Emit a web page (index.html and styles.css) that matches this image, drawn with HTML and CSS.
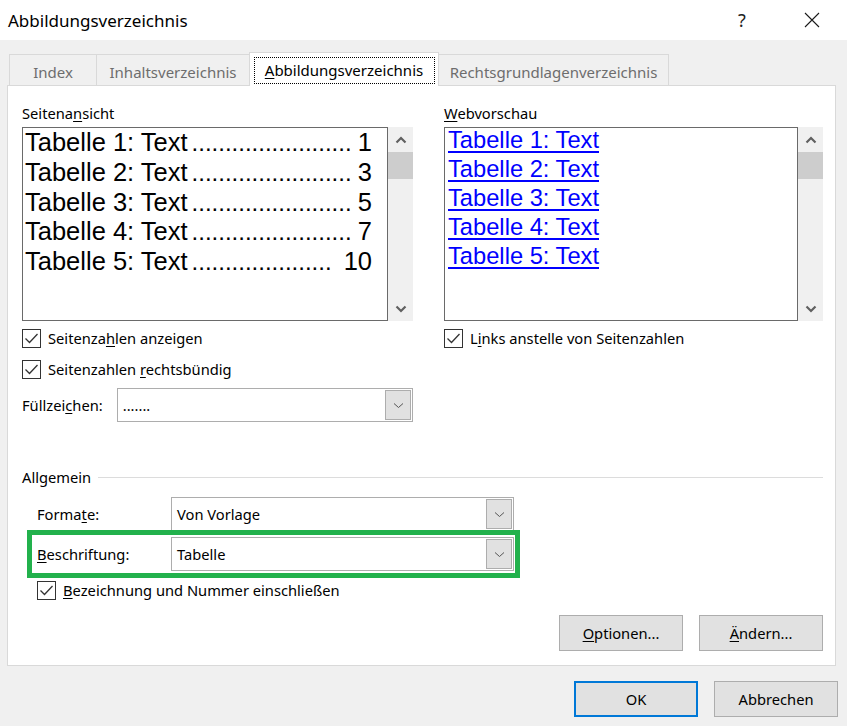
FILE: index.html
```html
<!DOCTYPE html>
<html lang="de">
<head>
<meta charset="utf-8">
<title>Abbildungsverzeichnis</title>
<link rel="stylesheet" href="styles.css">
</head>
<body>
<div class="titlebar">
  <span class="title">Abbildungsverzeichnis</span>
  <span class="help">?</span>
  <span class="close"><svg width="16" height="16" viewBox="0 0 16 16"><path d="M1 1 L15 15 M15 1 L1 15" stroke="#1a1a1a" stroke-width="1.1" fill="none"/></svg></span>
</div>

<div class="tabs">
  <div class="tab tab-index">Index</div>
  <div class="tab tab-inhalt">Inhaltsverzeichnis</div>
  <div class="tab tab-active"><span class="focus"><u>A</u>bbildungsverzeichnis</span></div>
  <div class="tab tab-recht">Rechtsgrundlagenverzeichnis</div>
</div>

<div class="panel">
  <div class="top">
    <div class="col col-left">
      <div class="label">Seitena<u>n</u>sicht</div>
      <div class="preview">
        <div class="listbox list-left">
          <div class="row"><span class="txt">Tabelle 1: Text</span><span class="lead">........................</span><span class="num">1</span></div>
          <div class="row"><span class="txt">Tabelle 2: Text</span><span class="lead">........................</span><span class="num">3</span></div>
          <div class="row"><span class="txt">Tabelle 3: Text</span><span class="lead">........................</span><span class="num">5</span></div>
          <div class="row"><span class="txt">Tabelle 4: Text</span><span class="lead">........................</span><span class="num">7</span></div>
          <div class="row"><span class="txt">Tabelle 5: Text</span><span class="lead">.....................</span><span class="num">10</span></div>
        </div>
        <div class="scrollbar">
          <div class="arrow"><svg width="12" height="8" viewBox="0 0 12 8"><polyline points="1.5,6.5 6,2 10.5,6.5" fill="none" stroke="#606060" stroke-width="2.2"/></svg></div>
          <div class="thumb"></div>
          <div class="track"></div>
          <div class="arrow"><svg width="12" height="8" viewBox="0 0 12 8"><polyline points="1.5,1.5 6,6 10.5,1.5" fill="none" stroke="#606060" stroke-width="2.2"/></svg></div>
        </div>
      </div>
      <div class="check check-1"><span class="box"><svg width="17" height="17" viewBox="0 0 17 17"><polyline points="2.5,8.5 6.5,12.5 14.5,4" fill="none" stroke="#333" stroke-width="1.3"/></svg></span><span>Seitenza<u>h</u>len anzeigen</span></div>
      <div class="check check-2"><span class="box"><svg width="17" height="17" viewBox="0 0 17 17"><polyline points="2.5,8.5 6.5,12.5 14.5,4" fill="none" stroke="#333" stroke-width="1.3"/></svg></span><span>Seitenzahlen <u>r</u>echtsbündig</span></div>
      <div class="field fill">
        <span class="flabel">Füllzei<u>c</u>hen:</span>
        <div class="combo combo-fill"><span class="value">.......</span><span class="dropbtn"><svg width="11" height="7" viewBox="0 0 11 7"><polyline points="1,1.5 5.5,5.5 10,1.5" fill="none" stroke="#555" stroke-width="1"/></svg></span></div>
      </div>
    </div>
    <div class="divider"></div>
    <div class="col col-right">
      <div class="label"><u>W</u>ebvorschau</div>
      <div class="preview">
        <div class="listbox list-right">
          <div class="link">Tabelle 1: Text</div>
          <div class="link">Tabelle 2: Text</div>
          <div class="link">Tabelle 3: Text</div>
          <div class="link">Tabelle 4: Text</div>
          <div class="link">Tabelle 5: Text</div>
        </div>
        <div class="scrollbar">
          <div class="arrow"><svg width="12" height="8" viewBox="0 0 12 8"><polyline points="1.5,6.5 6,2 10.5,6.5" fill="none" stroke="#606060" stroke-width="2.2"/></svg></div>
          <div class="thumb"></div>
          <div class="track"></div>
          <div class="arrow"><svg width="12" height="8" viewBox="0 0 12 8"><polyline points="1.5,1.5 6,6 10.5,1.5" fill="none" stroke="#606060" stroke-width="2.2"/></svg></div>
        </div>
      </div>
      <div class="check check-1"><span class="box"><svg width="17" height="17" viewBox="0 0 17 17"><polyline points="2.5,8.5 6.5,12.5 14.5,4" fill="none" stroke="#333" stroke-width="1.3"/></svg></span><span>L<u>i</u>nks anstelle von Seitenzahlen</span></div>
    </div>
  </div>

  <div class="group">
    <span class="gtitle">Allgemein</span><span class="gline"></span>
  </div>
  <div class="grow grow-1">
    <span class="glabel">Forma<u>t</u>e:</span>
    <div class="combo combo-wide"><span class="value">Von Vorlage</span><span class="dropbtn"><svg width="11" height="7" viewBox="0 0 11 7"><polyline points="1,1.5 5.5,5.5 10,1.5" fill="none" stroke="#555" stroke-width="1"/></svg></span></div>
  </div>
  <div class="grow grow-2">
    <span class="glabel"><u>B</u>eschriftung:</span>
    <div class="combo combo-wide"><span class="value">Tabelle</span><span class="dropbtn"><svg width="11" height="7" viewBox="0 0 11 7"><polyline points="1,1.5 5.5,5.5 10,1.5" fill="none" stroke="#555" stroke-width="1"/></svg></span></div>
  </div>
  <div class="check check-3"><span class="box"><svg width="17" height="17" viewBox="0 0 17 17"><polyline points="2.5,8.5 6.5,12.5 14.5,4" fill="none" stroke="#333" stroke-width="1.3"/></svg></span><span><u>B</u>ezeichnung und Nummer einschließen</span></div>

  <div class="btnrow">
    <div class="btn"><u>O</u>ptionen...</div>
    <div class="btn"><u>Ä</u>ndern...</div>
  </div>
</div>

<div class="footer">
  <div class="btn btn-ok">OK</div>
  <div class="btn">Abbrechen</div>
</div>

<div class="highlight"></div>
</body>
</html>
```

FILE: styles.css
```css
* { box-sizing: border-box; }
html, body { margin: 0; padding: 0; }
body {
  width: 847px;
  height: 726px;
  overflow: hidden;
  background: #f0f0f0;
  font-family: "Noto Sans", "Open Sans", sans-serif;
  font-size: 14.7px;
  color: #000;
  position: relative;
}
u { text-decoration: underline; text-underline-offset: 2px; text-decoration-thickness: 1px; }

.titlebar {
  height: 40px;
  background: #fff;
  display: flex;
  align-items: center;
  padding-left: 8px;
}
.title { font-size: 17px; flex: 1; }
.help { font-size: 18px; width: 20px; margin-right: 46px; color: #222; }
.close { width: 16px; height: 16px; margin-right: 27px; display: flex; }

.tabs {
  display: flex;
  align-items: flex-end;
  margin-top: 12px;
  margin-left: 9px;
  height: 33px;
}
.tab {
  height: 31px;
  border: 1px solid #d9d9d9;
  border-bottom: none;
  color: #6d6d6d;
  display: flex;
  align-items: center;
  justify-content: center;
  padding-top: 3px;
  font-size: 15px;
}
.tab + .tab { margin-left: -1px; }
.tab-index { width: 88px; }
.tab-inhalt { width: 154px; }
.tab-active {
  width: 190px;
  height: 34px;
  margin-bottom: -1px;
  background: #fff;
  color: #000;
  position: relative;
  z-index: 1;
  padding-top: 0;
  align-items: flex-start;
}
.focus {
  margin-top: 4px;
  width: 181px;
  height: 27px;
  border: 1px dotted #000;
  display: flex;
  align-items: center;
  justify-content: center;
  padding-bottom: 1px;
}
.tab-recht { width: 231px; }

.panel {
  margin-left: 7px;
  width: 829px;
  height: 581px;
  background: #fff;
  border: 1px solid #d9d9d9;
  padding: 17px 12px 0 14px;
}

.top { display: flex; height: 357px; }
.col-left { width: 391px; }
.col-right { width: 379px; margin-left: 16px; }
.divider { width: 1px; background: #a0a0a0; margin-left: 15px; }

.label { height: 20px; line-height: 20px; margin-bottom: 4px; }

.preview { display: flex; height: 194px; }
.listbox {
  border: 1px solid #6a6a6a;
  height: 194px;
  background: #fff;
  font-family: "Liberation Sans", Arial, sans-serif;
  padding-left: 3px;
}
.list-left { width: 366px; font-size: 25.5px; line-height: 29.75px; padding-right: 15px; padding-left: 2px; }
.list-right { width: 354px; font-size: 23.7px; line-height: 29px; }
.row { display: flex; white-space: nowrap; }
.lead { margin-left: 4px; font-size: 24px; }
.num { margin-left: auto; }
.link {
  color: #0000ff;
  text-decoration: underline;
  text-decoration-thickness: 2px;
  text-underline-offset: 3px;
  display: table;
}
.link:first-child { margin-top: -2px; }

.scrollbar {
  width: 25px;
  height: 194px;
  background: #f0f0f0;
  display: flex;
  flex-direction: column;
}
.arrow { height: 25px; display: flex; align-items: center; justify-content: center; }
.thumb { height: 27px; background: #cdcdcd; }
.track { flex: 1; }

.check { display: flex; align-items: center; height: 20px; gap: 7px; }
.box {
  width: 19px;
  height: 19px;
  border: 1px solid #333;
  display: flex;
  align-items: center;
  justify-content: center;
  flex: none;
}
.check-1 { margin-top: 7px; }
.check-2 { margin-top: 11px; }

.field { display: flex; align-items: center; margin-top: 9px; }
.flabel { width: 95px; }

.combo {
  display: flex;
  align-items: stretch;
  height: 34px;
  border: 1px solid #adadad;
  background: #fff;
  padding: 1px;
}
.combo-fill { width: 297px; }
.combo .value { flex: 1; display: flex; align-items: center; padding-left: 4px; }
.dropbtn {
  width: 26px;
  background: #e1e1e1;
  border: 1px solid #adadad;
  display: flex;
  align-items: center;
  justify-content: center;
}

.group { display: flex; align-items: center; margin-top: 7px; height: 20px; }
.gline { flex: 1; height: 1px; background: #dcdcdc; margin-left: 7px; margin-right: 0; }

.grow { display: flex; align-items: center; padding-left: 15px; }
.grow-1 { margin-top: 10px; }
.grow-2 { margin-top: 6px; }
.glabel { width: 134px; }
.combo-wide { width: 343px; }

.check-3 { margin-top: 9px; padding-left: 15px; }

.btnrow { display: flex; justify-content: flex-end; gap: 16px; margin-top: 15px; }
.btn {
  width: 124px;
  height: 36px;
  border: 1px solid #adadad;
  background: #e1e1e1;
  display: flex;
  align-items: center;
  justify-content: center;
}
.footer { display: flex; justify-content: flex-end; gap: 16px; margin-top: 15px; padding-right: 9px; }
.btn-ok { border: 2px solid #0078d7; }

.highlight {
  position: absolute;
  left: 27px;
  top: 530px;
  width: 493px;
  height: 48px;
  border: 5px solid #22b14c;
}
```
